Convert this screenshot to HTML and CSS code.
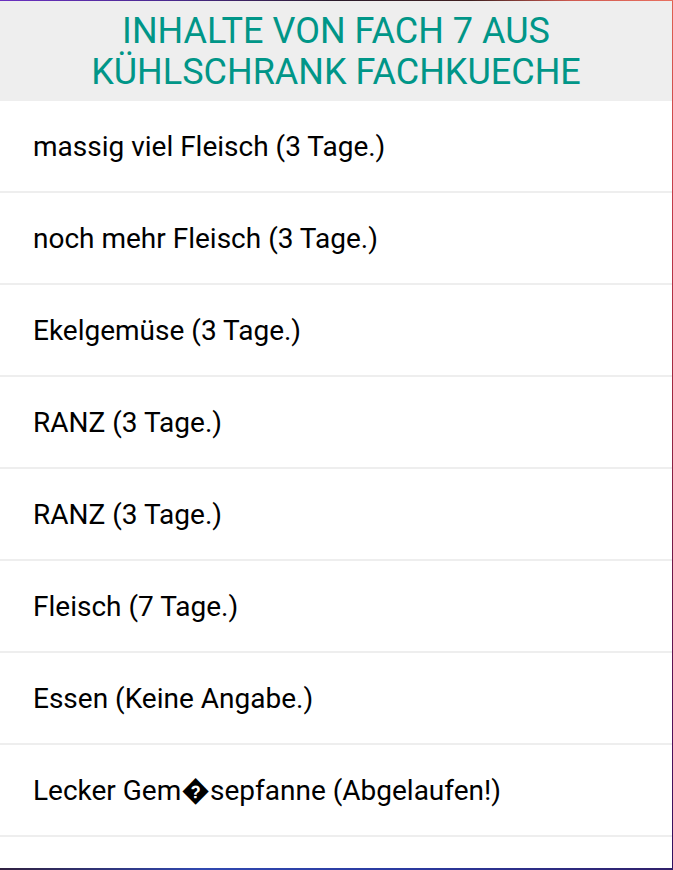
FILE: index.html
```html
<!DOCTYPE html>
<html lang="de">
<head>
<meta charset="utf-8">
<title>Inhalte</title>
<link rel="stylesheet" href="styles.css">
</head>
<body>
<div class="dialog">
  <header class="title">INHALTE VON FACH 7 AUS<br>KÜHLSCHRANK FACHKUECHE</header>
  <ul class="list">
    <li class="item">massig viel Fleisch (3 Tage.)</li>
    <li class="item">noch mehr Fleisch (3 Tage.)</li>
    <li class="item">Ekelgemüse (3 Tage.)</li>
    <li class="item">RANZ (3 Tage.)</li>
    <li class="item">RANZ (3 Tage.)</li>
    <li class="item">Fleisch (7 Tage.)</li>
    <li class="item">Essen (Keine Angabe.)</li>
    <li class="item">Lecker Gem&#xFFFD;sepfanne (Abgelaufen!)</li>
    <li class="item"></li>
  </ul>
</div>
</body>
</html>
```
FILE: styles.css
```css
html, body {
  margin: 0;
  height: 100%;
}
body {
  background:
    linear-gradient(90deg, #6a30c0 0%, #4a2a90 25%, #2a1a2a 50%, #402020 70%, #d05a50 85%, #e87060 100%) top left / 100% 1px no-repeat,
    linear-gradient(90deg, #302040 0%, #3048b0 30%, #2a3aa0 60%, #30206a 100%) bottom left / 100% 2px no-repeat,
    linear-gradient(180deg, #e06050 0%, #c03848 25%, #a02840 45%, #701848 65%, #50105a 85%, #301060 100%);
  overflow: hidden;
  font-family: Roboto, "Noto Sans", sans-serif;
}
.dialog {
  margin: 1px 1px 0 0;
  height: 867px;
  background: #fff;
  overflow: hidden;
}
.title {
  background: #eeeeee;
  color: #009688;
  font-size: 36px;
  line-height: 41px;
  text-align: center;
  padding: 10px 0 0;
  height: 100px;
  box-sizing: border-box;
}
.list {
  list-style: none;
  margin: 0;
  padding: 0;
}
.item {
  height: 90px;
  border-bottom: 2px solid #eeeeee;
  padding-left: 33px;
  display: flex;
  align-items: center;
  font-size: 28px;
  color: #000;
}
```
